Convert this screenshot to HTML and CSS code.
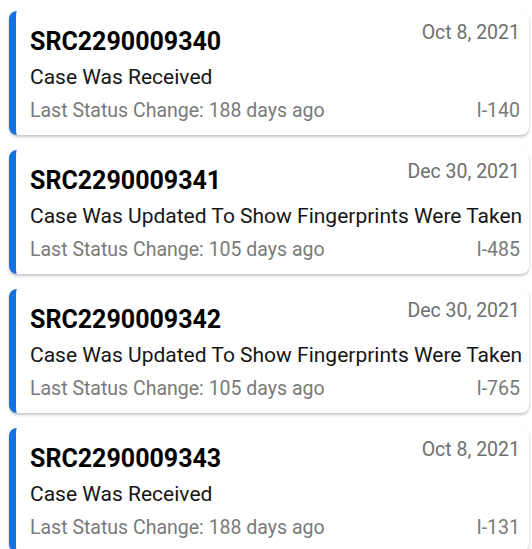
FILE: index.html
```html
<!DOCTYPE html>
<html lang="en">
<head>
    <meta charset="UTF-8">
    <meta name="viewport" content="width=device-width, initial-scale=1.0">
    <title>Case Status</title>
    <link rel="stylesheet" href="styles.css">
</head>
<body>

    <div class="case-list">
        <!-- case card -->
        <div class="case-card">
            <div class="case-top">
                <div class="case-number">SRC2290009340</div>
                <div class="case-date">Oct 8, 2021</div>
            </div>
            <div class="case-status">Case Was Received</div>
            <div class="case-bottom">
                <div class="case-change">Last Status Change: 188 days ago</div>
                <div class="case-form">I-140</div>
            </div>
        </div>

        <div class="case-card">
            <div class="case-top">
                <div class="case-number">SRC2290009341</div>
                <div class="case-date">Dec 30, 2021</div>
            </div>
            <div class="case-status">Case Was Updated To Show Fingerprints Were Taken</div>
            <div class="case-bottom">
                <div class="case-change">Last Status Change: 105 days ago</div>
                <div class="case-form">I-485</div>
            </div>
        </div>

        <div class="case-card">
            <div class="case-top">
                <div class="case-number">SRC2290009342</div>
                <div class="case-date">Dec 30, 2021</div>
            </div>
            <div class="case-status">Case Was Updated To Show Fingerprints Were Taken</div>
            <div class="case-bottom">
                <div class="case-change">Last Status Change: 105 days ago</div>
                <div class="case-form">I-765</div>
            </div>
        </div>

        <div class="case-card">
            <div class="case-top">
                <div class="case-number">SRC2290009343</div>
                <div class="case-date">Oct 8, 2021</div>
            </div>
            <div class="case-status">Case Was Received</div>
            <div class="case-bottom">
                <div class="case-change">Last Status Change: 188 days ago</div>
                <div class="case-form">I-131</div>
            </div>
        </div>
    </div>

</body>
</html>
```

FILE: styles.css
```css
body {
    margin: 0;
    padding: 0;
    background-color: #fff;
    color: #111;
    font-family: Roboto, "Liberation Sans", sans-serif;
}

.case-list {
    display: flex;
    flex-direction: column;
    gap: 15px;
    padding: 11px 3px 0 9px;
}

/* one card per case */
.case-card {
    height: 124px;
    box-sizing: border-box;
    background-color: #fff;
    border-left: 7px solid #1672e0;
    border-radius: 8px;
    box-shadow: 0 2px 3px rgba(0, 0, 0, 0.22), 0 0 1px rgba(0, 0, 0, 0.08);
    padding: 10px 9px 0 14px;
}

.case-top {
    display: flex;
    justify-content: space-between;
    align-items: flex-start;
}

.case-number {
    margin-top: 5px;
    font-size: 25px;
    font-weight: bold;
    line-height: 32px;
    color: #000;
}

.case-date {
    font-size: 19.5px;
    color: #6f6f6f;
    line-height: 24px;
}

.case-status {
    font-size: 21px;
    line-height: 38px;
    color: #151515;
    white-space: nowrap;
}

.case-bottom {
    display: flex;
    justify-content: space-between;
    font-size: 19.5px;
    line-height: 29px;
    color: #7a7a7a;
}
```
